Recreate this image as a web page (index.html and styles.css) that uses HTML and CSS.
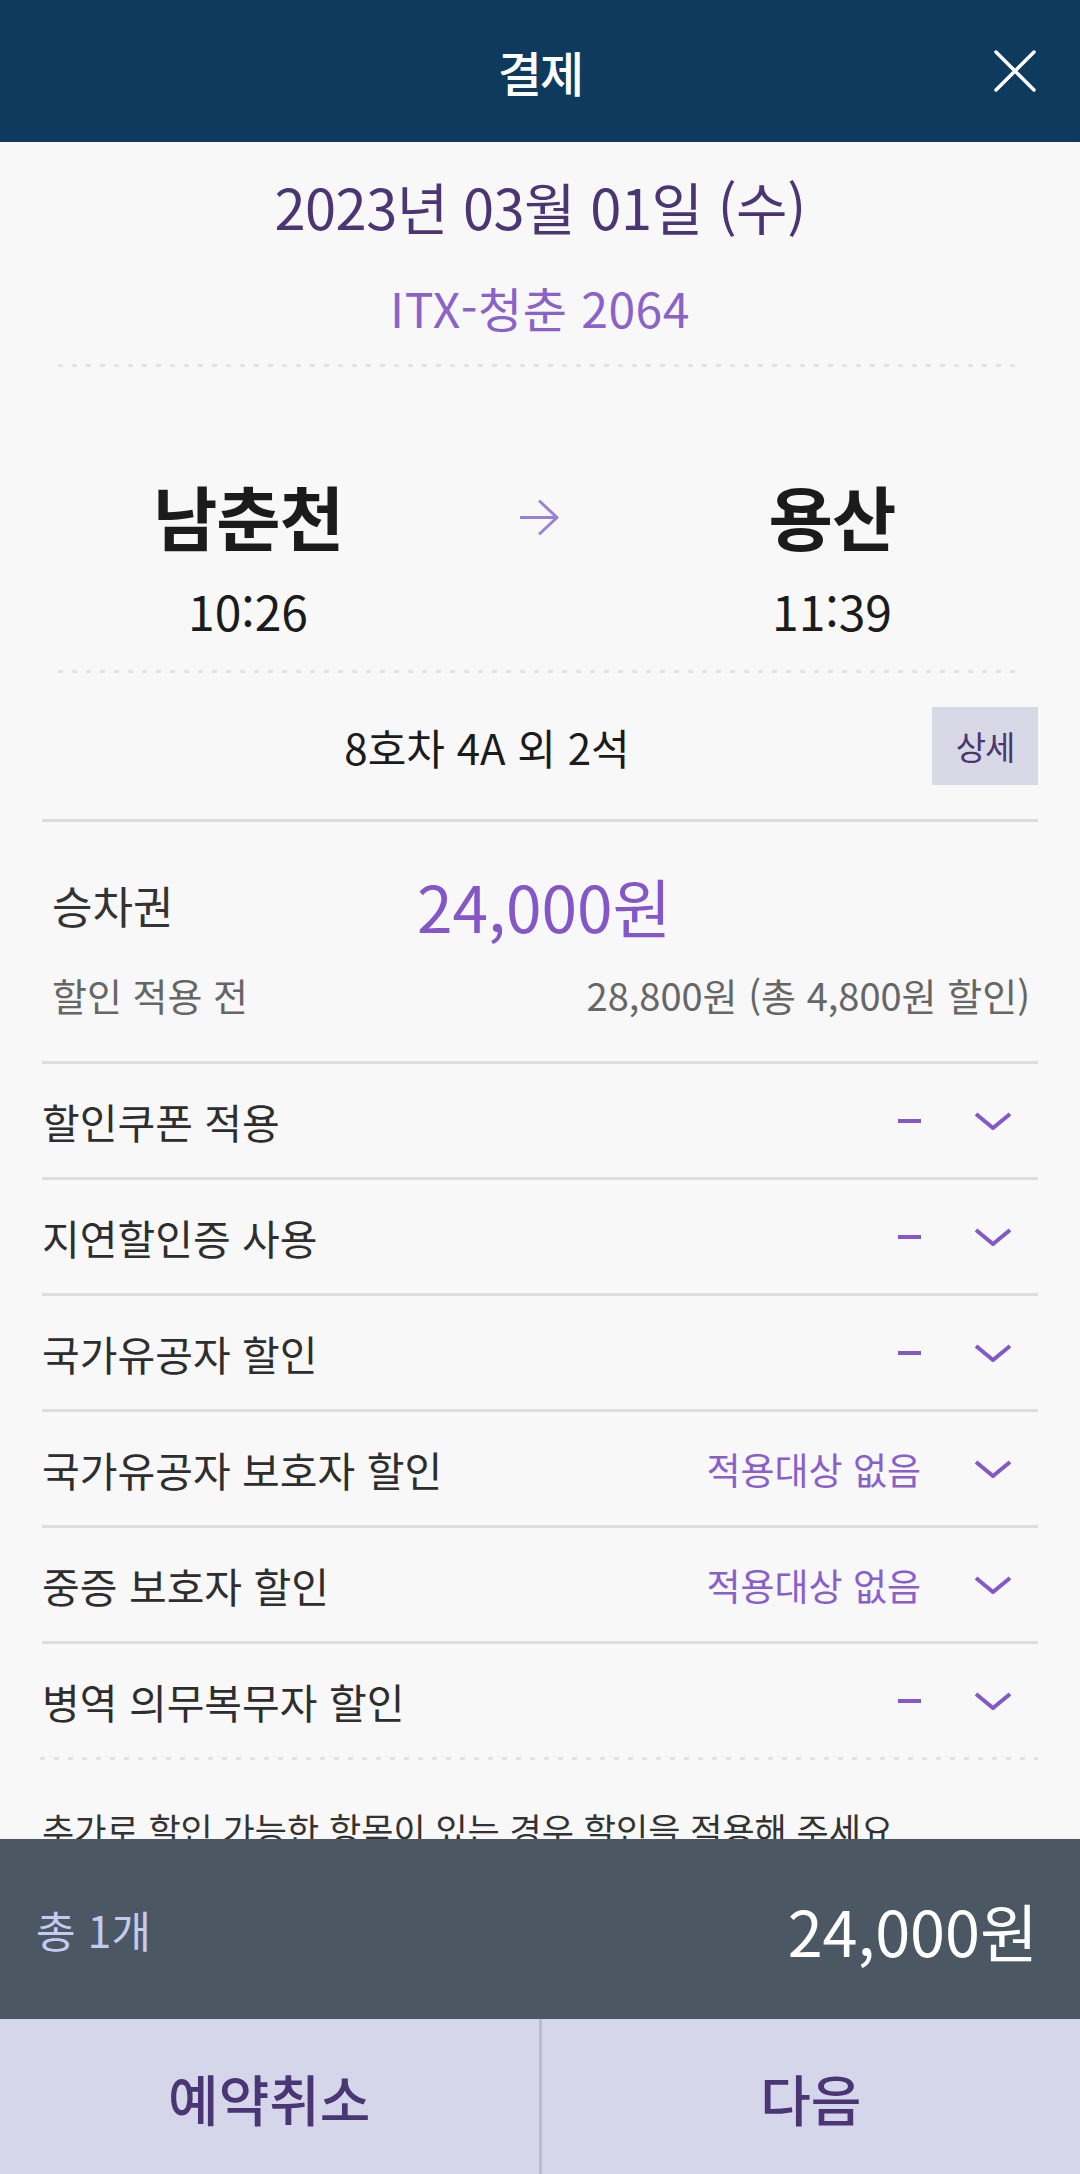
FILE: index.html
```html
<!DOCTYPE html>
<html lang="ko">
<head>
<meta charset="utf-8">
<title>결제</title>
<link rel="stylesheet" href="styles.css">
</head>
<body>
<div class="screen">
  <header class="topbar">
    <h1 class="title">결제</h1>
    <button class="close" aria-label="닫기">
      <svg width="42" height="42" viewBox="0 0 42 42"><path d="M2 2 L40 40 M40 2 L2 40" stroke="#fff" stroke-width="3.5" fill="none" stroke-linecap="round"/></svg>
    </button>
  </header>

  <main class="content">
    <section class="trip">
      <div class="date">2023년 03월 01일 (수)</div>
      <div class="train">ITX-청춘 2064</div>
      <div class="dotline inset"></div>
      <div class="route">
        <div class="stop">
          <div class="station">남춘천</div>
          <div class="time">10:26</div>
        </div>
        <div class="arrow">
          <svg width="40" height="35" viewBox="0 0 40 35"><path d="M1 17.5 H37 M20 1.5 L37 17.5 L20 33.5" stroke="#9a80d6" stroke-width="3" fill="none" stroke-linecap="round" stroke-linejoin="round"/></svg>
        </div>
        <div class="stop">
          <div class="station">용산</div>
          <div class="time">11:39</div>
        </div>
      </div>
      <div class="dotline inset"></div>
      <div class="seat-row">
        <div class="seat">8호차 4A 외 2석</div>
        <button class="detail">상세</button>
      </div>
    </section>

    <section class="fare">
      <div class="fare-main">
        <span class="fare-label">승차권</span>
        <span class="fare-price">24,000원</span>
      </div>
      <div class="fare-sub">
        <span>할인 적용 전</span>
        <span>28,800원 (총 4,800원 할인)</span>
      </div>
    </section>

    <ul class="discounts">
      <li class="disc"><span class="disc-name">할인쿠폰 적용</span><span class="dash" aria-label="-"></span><svg class="chev" width="38" height="18" viewBox="0 0 38 18"><path d="M2 2 L19 16 L36 2" stroke="#8458c8" stroke-width="4" fill="none"/></svg></li>
      <li class="disc"><span class="disc-name">지연할인증 사용</span><span class="dash" aria-label="-"></span><svg class="chev" width="38" height="18" viewBox="0 0 38 18"><path d="M2 2 L19 16 L36 2" stroke="#8458c8" stroke-width="4" fill="none"/></svg></li>
      <li class="disc"><span class="disc-name">국가유공자 할인</span><span class="dash" aria-label="-"></span><svg class="chev" width="38" height="18" viewBox="0 0 38 18"><path d="M2 2 L19 16 L36 2" stroke="#8458c8" stroke-width="4" fill="none"/></svg></li>
      <li class="disc"><span class="disc-name">국가유공자 보호자 할인</span><span class="disc-val">적용대상 없음</span><svg class="chev" width="38" height="18" viewBox="0 0 38 18"><path d="M2 2 L19 16 L36 2" stroke="#8458c8" stroke-width="4" fill="none"/></svg></li>
      <li class="disc"><span class="disc-name">중증 보호자 할인</span><span class="disc-val">적용대상 없음</span><svg class="chev" width="38" height="18" viewBox="0 0 38 18"><path d="M2 2 L19 16 L36 2" stroke="#8458c8" stroke-width="4" fill="none"/></svg></li>
      <li class="disc last"><span class="disc-name">병역 의무복무자 할인</span><span class="dash" aria-label="-"></span><svg class="chev" width="38" height="18" viewBox="0 0 38 18"><path d="M2 2 L19 16 L36 2" stroke="#8458c8" stroke-width="4" fill="none"/></svg></li>
    </ul>
    <div class="dotline wide"></div>
    <p class="notice">추가로 할인 가능한 항목이 있는 경우 할인을 적용해 주세요.</p>
  </main>

  <footer class="bottom">
    <div class="summary">
      <span class="count">총 1개</span>
      <span class="total">24,000원</span>
    </div>
    <div class="actions">
      <button class="act">예약취소</button>
      <span class="divider"></span>
      <button class="act">다음</button>
    </div>
  </footer>
</div>
</body>
</html>
```

FILE: styles.css
```css
* { box-sizing: border-box; }
html, body { margin: 0; padding: 0; }
body {
  background: #f8f8f8;
  font-family: "Noto Sans CJK KR", "Noto Sans", sans-serif;
  color: #222;
}
.screen { width: 1080px; min-height: 2174px; background: #f8f8f8; }

.topbar {
  position: relative;
  height: 142px;
  background: #0e3a5e;
  display: flex;
  align-items: center;
  justify-content: center;
}
.title {
  margin: 0;
  font-size: 48px;
  font-weight: 500;
  color: #fff;
  letter-spacing: -2px;
}
.close {
  position: absolute;
  right: 44px;
  top: 50px;
  width: 42px;
  height: 42px;
  padding: 0;
  border: 0;
  background: none;
  display: flex;
}

.content { padding-bottom: 360px; }

.trip { display: flex; flex-direction: column; }
.date {
  margin-top: 29px;
  height: 70px;
  line-height: 70px;
  text-align: center;
  font-size: 56px;
  color: #4b3673;
  letter-spacing: -0.5px;
}
.train {
  margin-top: 36px;
  height: 60px;
  line-height: 60px;
  text-align: center;
  font-size: 48px;
  color: #8a62c8;
  letter-spacing: 0.5px;
}
.dotline {
  height: 3px;
  background: repeating-linear-gradient(to right, #dfe3ea 0 5px, transparent 5px 14px);
}
.dotline.inset { margin: 0 58px; }
.train + .dotline { margin-top: 27px; }

.route {
  display: grid;
  grid-template-columns: 1fr 204px 1fr;
  padding: 0 58px;
  margin-top: 107px;
}
.stop { display: flex; flex-direction: column; align-items: center; }
.station {
  height: 84px;
  line-height: 84px;
  font-size: 70px;
  font-weight: 700;
  color: #1b1b1b;
  letter-spacing: -1px;
}
.time {
  margin-top: 24px;
  height: 56px;
  line-height: 56px;
  font-size: 48px;
  color: #1b1b1b;
  letter-spacing: 0;
}
.arrow { display: flex; justify-content: center; padding-top: 26px; }
.route + .dotline { margin-top: 32px; }

.seat-row {
  display: flex;
  align-items: center;
  margin: 34px 42px 0;
  height: 78px;
}
.seat {
  flex: 1;
  text-align: center;
  font-size: 42px;
  color: #1b1b1b;
  letter-spacing: 0;
}
.detail {
  width: 106px;
  height: 78px;
  border: 0;
  padding: 0;
  background: #d8d8e6;
  color: #4a3670;
  font-family: inherit;
  font-size: 33px;
  letter-spacing: -1px;
}

.fare {
  margin: 34px 42px 0;
  border-top: 3px solid #dddddd;
  border-bottom: 3px solid #dddddd;
  padding: 37px 8px 43px 10px;
}
.fare-main {
  display: grid;
  grid-template-columns: 365px 1fr;
  align-items: center;
  height: 72px;
}
.fare-label { font-size: 44px; color: #333; letter-spacing: 0; }
.fare-price { font-size: 64px; color: #8457c9; letter-spacing: 0; }
.fare-sub {
  margin-top: 39px;
  height: 48px;
  display: flex;
  justify-content: space-between;
  align-items: center;
  font-size: 38px;
  color: #666;
  letter-spacing: 0;
}

.discounts { list-style: none; margin: 0 42px; padding: 0; }
.disc {
  height: 116px;
  display: flex;
  align-items: center;
  border-bottom: 3px solid #dddddd;
}
.disc.last { border-bottom: 0; height: 113px; }
.disc-name {
  flex: 1;
  font-size: 41px;
  color: #2e2e2e;
  letter-spacing: 0;
}
.dash {
  width: 23px;
  height: 4px;
  background: #8458c8;
  margin-right: 53px;
}
.disc-val {
  font-size: 37px;
  color: #8a5fcc;
  letter-spacing: 0;
  margin-right: 53px;
}
.chev { margin-right: 26px; }

.dotline.wide { margin: 0 42px 0 40px; }
.notice {
  margin: 45px 42px 0;
  font-size: 35px;
  line-height: 48px;
  color: #333;
  letter-spacing: 0;
  white-space: nowrap;
}

.bottom {
  position: fixed;
  left: 0;
  bottom: 0;
  width: 1080px;
}
.summary {
  height: 180px;
  background: #4b5864;
  display: flex;
  align-items: center;
  justify-content: space-between;
  padding: 0 42px 0 36px;
}
.count { font-size: 43px; color: #c7caf0; letter-spacing: 0; }
.total { font-size: 63px; color: #fff; letter-spacing: 0; }
.actions {
  height: 155px;
  display: flex;
  background: #d5d6ea;
}
.act {
  flex: 1;
  border: 0;
  padding: 0;
  background: #d5d6ea;
  color: #4a3575;
  font-family: inherit;
  font-size: 55px;
  font-weight: 500;
  letter-spacing: 0;
}
.divider { width: 3px; background: #b8bfca; }
```
